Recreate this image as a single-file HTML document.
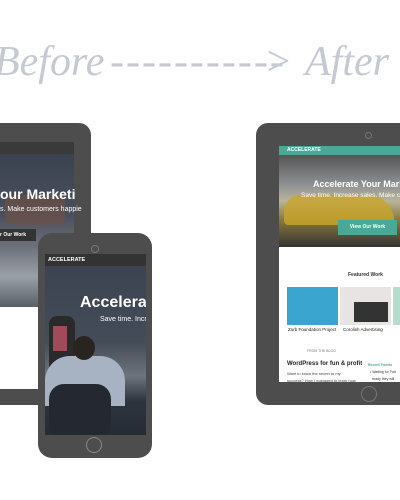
<!DOCTYPE html><html><head><style>
body{margin:0;width:400px;height:500px;background:#fff;position:relative;overflow:hidden;font-family:"Liberation Sans",sans-serif}
.a{position:absolute}
.t{font-family:"Liberation Serif",serif;font-style:italic;color:#c5c9d2;font-size:42px;top:38px}
</style></head><body>
<div class="a t" style="left:-6px">Before</div>
<div class="a t" style="left:110px;letter-spacing:2px">-----------</div>
<div class="a t" style="left:264px">&gt;</div>
<div class="a t" style="left:305px">After</div>

<!-- left tablet -->
<div class="a" style="left:-30px;top:123px;width:121px;height:282px;background:#4d4d4d;border-radius:12px"></div>
<div class="a" style="left:0;top:142px;width:74px;height:12px;background:#3a3a3a"></div>
<div class="a" style="left:0;top:154px;width:74px;height:153px;background:linear-gradient(180deg,#3b4250 0%,#4a4f5c 40%,#6b6f78 60%,#9aa0a8 80%,#5a5f66 100%)"></div>
<div class="a" style="left:5px;top:195px;width:60px;height:30px;background:#7a5040;opacity:.5;border-radius:8px"></div>
<div class="a" style="left:0;top:186px;color:#fff;font-weight:bold;font-size:14px;white-space:nowrap">our Marketi</div>
<div class="a" style="left:0;top:206px;color:#fff;font-size:7px;white-space:nowrap">s. Make customers happie</div>
<div class="a" style="left:0;top:229px;width:36px;height:12px;background:#333;color:#fff;font-size:5px;font-weight:bold;line-height:12px">r Our Work</div>
<div class="a" style="left:0;top:307px;width:74px;height:82px;background:#fff"></div>

<!-- phone -->
<div class="a" style="left:38px;top:233px;width:114px;height:225px;background:#4d4d4d;border-radius:14px"></div>
<div class="a" style="left:91px;top:245px;width:6px;height:6px;border:1px solid #777;border-radius:50%"></div>
<div class="a" style="left:45px;top:254px;width:101px;height:12px;background:#333;color:#fff;font-size:5.5px;font-weight:bold;line-height:12px;padding-left:3px;box-sizing:border-box">ACCELERATE</div>
<div class="a" style="left:45px;top:266px;width:101px;height:169px;background:linear-gradient(180deg,#3c4452 0%,#444c58 45%,#6e747c 65%,#2e343e 80%,#262b33 100%);overflow:hidden">
<div class="a" style="left:4px;top:50px;width:26px;height:55px;background:#2a2a2a;border-radius:8px 8px 0 0"></div>
<div class="a" style="left:8px;top:60px;width:14px;height:25px;background:#a04a5a"></div>
<div class="a" style="left:0;top:90px;width:80px;height:50px;background:#a7b2c2;border-radius:25px 25px 0 0"></div>
<div class="a" style="left:28px;top:70px;width:22px;height:24px;background:#2a2420;border-radius:50%"></div>
<div class="a" style="left:4px;top:118px;width:62px;height:55px;background:#242830;border-radius:15px"></div>
<div class="a" style="left:35px;top:28px;color:#fff;font-weight:bold;font-size:16px;white-space:nowrap">Accelerat</div>
<div class="a" style="left:55px;top:50px;color:#fff;font-size:7px;white-space:nowrap">Save time. Incre</div>
</div>
<div class="a" style="left:86px;top:437px;width:14px;height:14px;border:1px solid #888;border-radius:50%"></div>

<!-- right tablet -->
<div class="a" style="left:256px;top:123px;width:170px;height:282px;background:#4d4d4d;border-radius:12px"></div>
<div class="a" style="left:365px;top:132px;width:5px;height:5px;border:1px solid #777;border-radius:50%"></div>
<div class="a" style="left:279px;top:146px;width:121px;height:236px;background:#fff"></div>
<div class="a" style="left:279px;top:146px;width:121px;height:9px;background:#4aa896;color:#fff;font-size:5px;font-weight:bold;line-height:9px;padding-left:8px;box-sizing:border-box">ACCELERATE</div>
<div class="a" style="left:279px;top:155px;width:121px;height:92px;background:linear-gradient(180deg,#555 0%,#8a8d90 30%,#b9b49a 50%,#8a7a3a 70%,#333 100%);overflow:hidden">
<div class="a" style="left:5px;top:40px;width:110px;height:30px;background:#c9a52a;border-radius:20px 30px 5px 5px;opacity:.8"></div>
<div class="a" style="left:34px;top:24px;color:#fff;font-weight:bold;font-size:9px;white-space:nowrap">Accelerate Your Mark</div>
<div class="a" style="left:22px;top:37px;color:#fff;font-size:6.5px;white-space:nowrap">Save time. Increase sales. Make custon</div>
<div class="a" style="left:59px;top:65px;width:59px;height:15px;background:#4aa896;color:#fff;font-size:5px;font-weight:bold;text-align:center;line-height:15px">View Our Work</div>
</div>
<div class="a" style="left:348px;top:272px;font-size:5px;font-weight:bold;color:#333">Featured Work</div>
<div class="a" style="left:287px;top:287px;width:51px;height:38px;background:#3aa6d0"></div>
<div class="a" style="left:340px;top:287px;width:51px;height:38px;background:#e8e4e4"><div class="a" style="left:14px;top:15px;width:34px;height:20px;background:#333"></div></div>
<div class="a" style="left:393px;top:287px;width:10px;height:38px;background:#b8dcd0"></div>
<div class="a" style="left:288px;top:327px;font-size:4.5px;color:#222;white-space:nowrap">Zurb Foundation Project</div>
<div class="a" style="left:343px;top:327px;font-size:4.5px;color:#222;white-space:nowrap">Corolish Advertising</div>
<div class="a" style="left:307px;top:349px;font-size:3.5px;color:#777">FROM THE BLOG</div>
<div class="a" style="left:287px;top:361px;font-size:6px;font-weight:bold;color:#222;white-space:nowrap">WordPress for fun &amp; profit</div>
<div class="a" style="left:287px;top:371px;font-size:4px;color:#444;white-space:nowrap">Want to know the secret to my</div>
<div class="a" style="left:287px;top:378px;font-size:4px;color:#444;white-space:nowrap">success? How I managed to learn how</div>
<div class="a" style="left:368px;top:363px;font-size:3.5px;color:#4aa896;font-weight:bold;white-space:nowrap">Recent Tweets</div>
<div class="a" style="left:370px;top:370px;font-size:3.5px;color:#333;white-space:nowrap">• Waiting for Twit</div>
<div class="a" style="left:372px;top:377px;font-size:3.5px;color:#333;white-space:nowrap">ready they will</div>
<div class="a" style="left:361px;top:386px;width:14px;height:14px;border:1px solid #777;border-radius:50%"></div>
</body></html>
